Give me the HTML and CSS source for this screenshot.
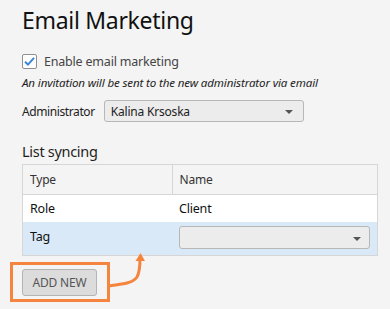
FILE: index.html
```html
<!DOCTYPE html>
<html lang="en">
<head>
    <meta charset="UTF-8" />
    <title>Email Marketing</title>
    <link rel="stylesheet" href="styles.css">
</head>
<body>
    <div class="page">
        <h1 class="title">Email Marketing</h1>

        <label class="check-row">
            <span class="checkbox">
                <svg width="13" height="13" viewBox="0 0 13 13"><path d="M2 6.8 L5 9.6 L11 2.8" fill="none" stroke="#3d86d8" stroke-width="2"/></svg>
            </span>
            <span class="check-label">Enable email marketing</span>
        </label>
        <p class="note">An invitation will be sent to the new administrator via email</p>

        <div class="field-row">
            <span class="field-label">Administrator</span>
            <div class="select admin-select">
                <span>Kalina Krsoska</span>
                <span class="caret"></span>
            </div>
        </div>

        <h2 class="section-title">List syncing</h2>
        <table class="sync-table">
            <thead>
                <tr><th class="col-type">Type</th><th>Name</th></tr>
            </thead>
            <tbody>
                <tr><td>Role</td><td>Client</td></tr>
                <tr class="selected">
                    <td class="tag-cell">Tag</td>
                    <td><div class="select cell-select"><span></span><span class="caret"></span></div></td>
                </tr>
            </tbody>
        </table>

        <div class="actions">
            <div class="highlight">
                <button class="btn">ADD NEW</button>
            </div>
            <svg class="callout-arrow" width="50" height="50" viewBox="0 0 50 50">
                <path d="M0 33 C14 31 24 30 28 24 C31 19 31 12 31 5" fill="none" stroke="#f5843f" stroke-width="3"/>
                <path d="M26.5 8 L31.5 0 L36 8 Z" fill="#f5843f"/>
            </svg>
        </div>
    </div>
</body>
</html>
```

FILE: styles.css
```css
* {
    margin: 0;
    padding: 0;
    box-sizing: border-box;
}

body {
    font-family: 'Noto Sans', 'Open Sans', sans-serif;
    background: #f4f4f4;
    color: #1e1e1e;
    width: 390px;
    height: 309px;
    overflow: hidden;
}

.page {
    padding: 4px 0 0 22px;
}

.title {
    font-size: 23px;
    font-weight: 400;
    letter-spacing: -0.3px;
    line-height: 32px;
    color: #111;
}

.check-row {
    display: flex;
    align-items: center;
    gap: 7px;
    margin-top: 18px;
    height: 15px;
}

.checkbox {
    width: 15px;
    height: 15px;
    border: 1px solid #8f8f8f;
    border-radius: 2px;
    background: #fff;
    display: flex;
    align-items: center;
    justify-content: center;
}

.check-label {
    font-size: 12.5px;
    color: #444;
    letter-spacing: -0.2px;
}

.note {
    font-size: 11.6px;
    font-style: italic;
    color: #1e1e1e;
    margin-top: 6px;
    letter-spacing: -0.15px;
    line-height: 16px;
}

.field-row {
    display: flex;
    align-items: center;
    gap: 9px;
    margin-top: 9px;
}

.field-label {
    font-size: 12px;
    letter-spacing: -0.4px;
    color: #222;
}

.select {
    display: flex;
    align-items: center;
    justify-content: space-between;
    border: 1px solid #b7b7b7;
    border-radius: 3px;
    background: #ececec;
    font-size: 12px;
    color: #222;
    letter-spacing: -0.2px;
}

.admin-select {
    width: 200px;
    height: 22px;
    padding: 0 10px 0 6px;
}

.caret {
    width: 0;
    height: 0;
    border-left: 4px solid transparent;
    border-right: 4px solid transparent;
    border-top: 4px solid #555;
    margin-top: 2px;
}

.section-title {
    font-size: 14.5px;
    font-weight: 400;
    color: #1e1e1e;
    letter-spacing: -0.3px;
    margin-top: 19px;
    line-height: 20px;
}

.sync-table {
    border-collapse: collapse;
    width: 356px;
    margin-top: 3px;
    border: 1px solid #d6d6d6;
    font-size: 12.5px;
    letter-spacing: -0.2px;
}

.sync-table th {
    text-align: left;
    font-weight: 400;
    font-size: 12px;
    color: #333;
    background: #f4f4f4;
    height: 30px;
    padding: 0 7px;
    border-bottom: 1px solid #d6d6d6;
    border-right: 1px solid #d6d6d6;
}

.sync-table .col-type {
    width: 150px;
}

.sync-table td {
    height: 27px;
    padding: 0 7px;
    background: #fff;
    color: #111;
}

.sync-table .selected td {
    background: #dae9f7;
    height: 34px;
}

.sync-table .tag-cell {
    vertical-align: top;
    padding-top: 6px;
}

.cell-select {
    width: 191px;
    height: 23px;
    padding: 0 8px;
    margin-bottom: 1px;
}

.actions {
    display: flex;
    align-items: flex-start;
    margin: 6px 0 0 -12px;
}

.highlight {
    border: 3px solid #f5843f;
    padding: 4px 10px 3px 9px;
}

.btn {
    font-family: inherit;
    font-size: 12px;
    letter-spacing: -0.2px;
    color: #555;
    background: #dcdcdc;
    border: 1px solid #b4b4b4;
    border-radius: 3px;
    width: 75px;
    height: 27px;
}

.callout-arrow {
    margin: -9px 0 0 -1px;
}
```
